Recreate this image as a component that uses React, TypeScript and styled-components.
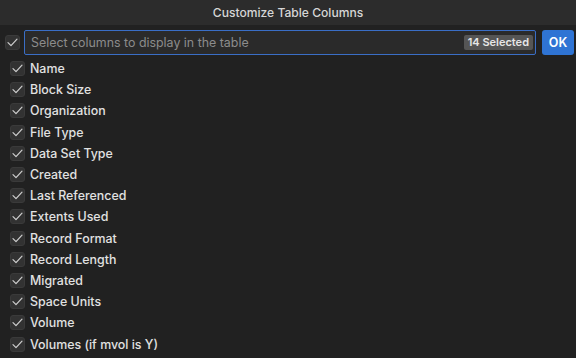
import React, { useState } from "react";
import styled, { createGlobalStyle } from "styled-components";

const columns = [
  "Name",
  "Block Size",
  "Organization",
  "File Type",
  "Data Set Type",
  "Created",
  "Last Referenced",
  "Extents Used",
  "Record Format",
  "Record Length",
  "Migrated",
  "Space Units",
  "Volume",
  "Volumes (if mvol is Y)",
];

const GlobalStyle = createGlobalStyle`
  html, body {
    margin: 0;
    padding: 0;
    background: #212121;
    font-family: "Inter", "Liberation Sans", sans-serif;
    -webkit-font-smoothing: antialiased;
  }
`;

const Check = ({ checked }: { checked: boolean }) => (
  <StyledCheck>
    {checked && (
      <svg width="11" height="9" viewBox="0 0 11 9" fill="none">
        <path
          d="M1 4.6 L4 7.6 L10 1.2"
          stroke="#cfcfcf"
          strokeWidth="1.2"
          strokeLinecap="round"
          strokeLinejoin="round"
        />
      </svg>
    )}
  </StyledCheck>
);

const App = () => {
  const [selected, setSelected] = useState<string[]>(columns);

  const toggle = (name: string) =>
    setSelected((prev) =>
      prev.includes(name) ? prev.filter((c) => c !== name) : [...prev, name]
    );

  return (
    <Dialog>
      <GlobalStyle />
      <TitleBar>Customize Table Columns</TitleBar>
      <Toolbar>
        <CheckWrap onClick={() => setSelected(selected.length ? [] : columns)}>
          <Check checked={selected.length === columns.length} />
        </CheckWrap>
        <SearchBox>
          <input placeholder="Select columns to display in the table" />
          <Badge>{selected.length} Selected</Badge>
        </SearchBox>
        <OkButton>OK</OkButton>
      </Toolbar>
      <List>
        {columns.map((name) => (
          <Row key={name} onClick={() => toggle(name)}>
            <Check checked={selected.includes(name)} />
            <span>{name}</span>
          </Row>
        ))}
      </List>
    </Dialog>
  );
};

const Dialog = styled.div`
  width: 576px;
  height: 358px;
  display: flex;
  flex-direction: column;
  background: #212121;
  overflow: hidden;
`;

const TitleBar = styled.div`
  height: 25px;
  flex-shrink: 0;
  display: flex;
  align-items: center;
  justify-content: center;
  background: #2c2c2c;
  color: #d6d6d6;
  font-size: 12.1px;
  font-weight: 500;
  padding-bottom: 1px;
  box-sizing: border-box;
`;

const Toolbar = styled.div`
  display: flex;
  align-items: center;
  padding: 4px 2px 0 5px;
  height: 26px;
`;

const CheckWrap = styled.div`
  display: flex;
  cursor: pointer;
`;

const StyledCheck = styled.div`
  width: 15px;
  height: 15px;
  flex-shrink: 0;
  border-radius: 3px;
  background: #323232;
  border: 1px solid #3a3a3a;
  box-sizing: border-box;
  display: flex;
  align-items: center;
  justify-content: center;
`;

const SearchBox = styled.div`
  flex: 1;
  height: 25px;
  margin-left: 4px;
  box-sizing: border-box;
  border: 1.5px solid #3a6ec6;
  border-radius: 2px;
  background: #2a2a2a;
  display: flex;
  align-items: center;
  padding: 0 2px 0 6px;
  & input {
    all: unset;
    flex: 1;
    font-family: inherit;
    font-size: 12.4px;
    color: #e0e0e0;
    &::placeholder {
      color: #8c8c8c;
    }
  }
`;

const Badge = styled.span`
  background: #555555;
  color: #e6e6e6;
  font-size: 11px;
  font-weight: 600;
  height: 15px;
  line-height: 15px;
  padding: 0 4px;
  border-radius: 2px;
`;

const OkButton = styled.button`
  all: unset;
  cursor: pointer;
  margin-left: 6px;
  width: 32px;
  height: 25px;
  border-radius: 3px;
  background: #2f74d4;
  color: #ffffff;
  font-size: 12.5px;
  font-weight: 600;
  display: flex;
  align-items: center;
  justify-content: center;
`;

const List = styled.div`
  display: flex;
  flex-direction: column;
  padding: 3px 0 0 10px;
`;

const Row = styled.label`
  display: flex;
  align-items: center;
  gap: 5px;
  height: 21.2px;
  color: #e2e2e2;
  font-size: 12.4px;
  font-weight: 500;
  cursor: pointer;
`;

export default App;
